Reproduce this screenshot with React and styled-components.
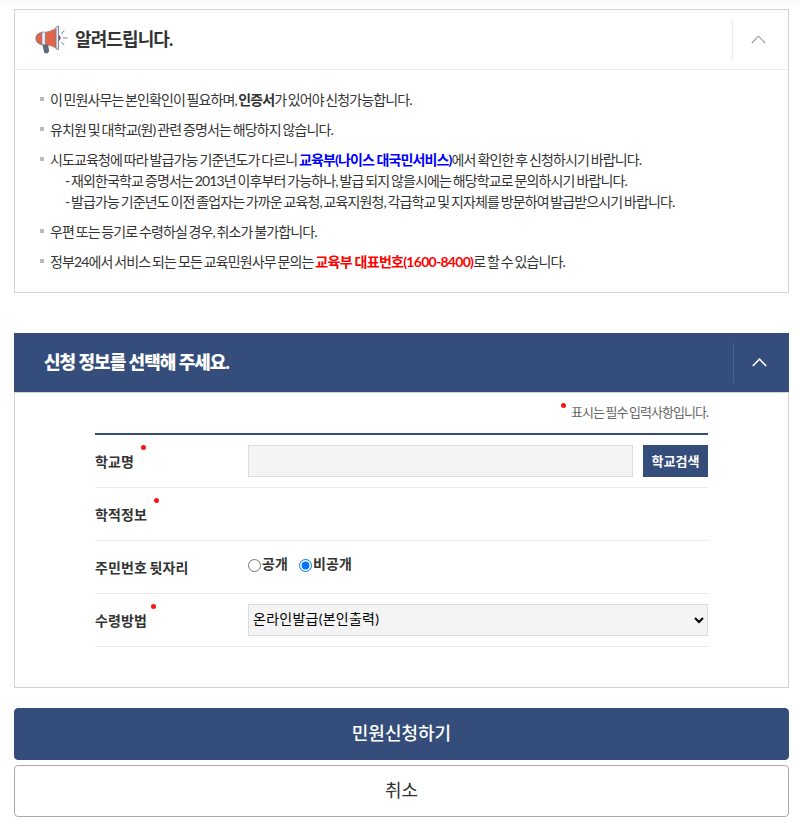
import React from "react";
import styled, { createGlobalStyle } from "styled-components";

const NAVY = "#344d7a";
const FONT = 'Lato, "Noto Sans CJK KR", sans-serif';

const GlobalStyle = createGlobalStyle`
  * { box-sizing: border-box; }
  html, body { margin: 0; padding: 0; background: #fff; }
  body { font-family: ${FONT}; color: #333; overflow: hidden; }
  h2, p, ul { margin: 0; padding: 0; }
`;

const Page = styled.main`
  width: 800px;
  height: 828px;
  padding: 9px 11px 0 14px;
  background: linear-gradient(#f8f8f8, #fff 5px);
`;

const NoticePanel = styled.section`
  height: 284px;
  border: 1px solid #d2d2d2;
  background: #fff;
`;

const NoticeHeader = styled.header`
  display: flex;
  align-items: center;
  height: 60px;
  padding-left: 20px;
  border-bottom: 1px solid #ebebeb;
`;

const Title = styled.h2`
  flex: 1;
  padding-bottom: 2px;
  font-size: 18px;
  font-weight: ${(p) => p.$weight || 700};
  line-height: 26px;
  letter-spacing: ${(p) => p.$spacing};
  white-space: pre;
`;

const NoticeTitle = styled(Title)`
  margin-left: 7px;
`;

const Toggle = styled.button`
  display: flex;
  align-items: center;
  justify-content: center;
  width: 56px;
  height: 40px;
  padding: 0 4px 0 0;
  border: 0;
  border-left: 1px solid ${(p) => p.$line};
  background: none;
  color: ${(p) => p.$color};
`;

const NoticeList = styled.ul`
  display: flex;
  flex-direction: column;
  gap: 9px;
  padding: 19px 0 0 25px;
  list-style: none;
`;

const NoticeItem = styled.li`
  display: flex;
  align-items: flex-start;
  gap: 6px;

  &::before {
    content: "";
    flex: none;
    width: 4px;
    height: 4px;
    margin-top: 8px;
    background: #bbb;
  }
`;

const Line = styled.p`
  height: 21px;
  padding-left: ${(p) => (p.$sub ? "15px" : "0")};
  font-size: 14px;
  line-height: 21px;
  letter-spacing: -0.88px;
  word-spacing: ${(p) => p.$gap || "-0.9px"};
  white-space: pre;
`;

const Strong = styled.b`
  font-weight: 700;
  letter-spacing: ${(p) => p.$spacing || "-0.88px"};
  word-spacing: 0.1px;
  color: ${(p) => p.$color || "inherit"};
`;

const FormPanel = styled.section`
  margin-top: 40px;
  height: 355px;
`;

const FormHeader = styled.header`
  display: flex;
  align-items: center;
  height: 59px;
  padding: 0 0 0 30px;
  background: ${NAVY};
  color: #fff;
`;

const FormBody = styled.div`
  height: 296px;
  padding: 0 80px;
  border: 1px solid #d2d2d2;
  background: #fff;
`;

const Guide = styled.p`
  display: flex;
  justify-content: flex-end;
  height: 40px;
  padding-top: 9px;
  font-size: 13px;
  line-height: 21px;
  letter-spacing: -0.96px;
  word-spacing: -0.9px;
  color: #666;
  white-space: pre;
`;

const Dot = styled.i`
  flex: none;
  width: 5px;
  height: 5px;
  margin: ${(p) => p.$margin};
  border-radius: 50%;
  background: #fb1414;
`;

const Fields = styled.div`
  border-top: 2px solid ${NAVY};
`;

const Row = styled.div`
  display: grid;
  grid-template-columns: 153px 1fr;
  height: 53px;
  border-bottom: 1px solid #ebebeb;
`;

const Label = styled.div`
  display: flex;
  padding-top: 16px;
  font-size: 14px;
  font-weight: 700;
  line-height: 22px;
  letter-spacing: 0.12px;
  word-spacing: -1px;
  white-space: pre;
`;

const Control = styled.div`
  display: flex;
  gap: ${(p) => p.$gap || "0"};
  padding-top: 10px;
`;

const SchoolInput = styled.input`
  width: 385px;
  height: 32px;
  border: 1px solid #dcdcdc;
  background: #f4f4f4;
`;

const SearchButton = styled.button`
  width: 65px;
  height: 32px;
  padding: 0;
  border: 0;
  background: ${NAVY};
  color: #fff;
  font: 700 13px/32px ${FONT};
  white-space: nowrap;
`;

const RadioLabel = styled.label`
  display: flex;
  height: 22px;
  margin: 2px 11px 0 0;
  font-size: 14px;
  font-weight: 700;
  line-height: 22px;
  letter-spacing: 0.12px;
`;

const Radio = styled.input`
  width: 13px;
  height: 13px;
  margin: 6px 1px 0 0;
`;

const Select = styled.select`
  width: 460px;
  height: 32px;
  padding: 0 1px 3px 0;
  border: 1px solid #dcdcdc;
  border-radius: 0;
  background: #f4f4f4;
  color: #000;
  font: 400 14px ${FONT};
  letter-spacing: 0.25px;
`;

const Actions = styled.div`
  display: flex;
  flex-direction: column;
  gap: 5px;
  margin-top: 20px;
`;

const ActionButton = styled.button`
  height: 52px;
  padding: 0 0 3px;
  border: 1px solid ${(p) => (p.$primary ? NAVY : "#aaa")};
  border-radius: 4px;
  background: ${(p) => (p.$primary ? NAVY : "#fff")};
  color: ${(p) => (p.$primary ? "#fff" : "#333")};
  font: ${(p) => (p.$primary ? 500 : 400)} 18px/47px "Noto Sans CJK KR", sans-serif;
`;

const Megaphone = () => (
  <svg width="33" height="30" viewBox="0 0 33 30">
    <path d="M7 18.500h6l1.200 8-2 2-2.800-.6z" fill="#5c6b7e" />
    <path d="M7 7.500h4v12h-4Q1 18.500 1 13.300Q1 8.500 7 7.500z" fill="#e2674a" stroke="#8b5260" strokeWidth=".9" />
    <path d="M10 7.500Q18 6 22 2.500v21.500Q18 20 10 19.500z" fill="#e2674a" stroke="#a4544f" strokeWidth=".6" />
    <path d="M7 7h3.200v12.700h-3.200z" fill="#f4f5fa" stroke="#7782a0" strokeWidth=".7" />
    <path d="M21 2.500Q22 .8 23.500 1v23.500q-1.500.5-2.500-1.500z" fill="#eceef6" stroke="#6d7895" strokeWidth=".9" />
    <path d="M24 10.500q3 2.500 0 5z" fill="#c45355" stroke="#6c587c" strokeWidth=".7" />
    <path d="M26.300 9l3-3.500M28 13h4.500M26.300 17l3 3.200" stroke="#76839d" strokeWidth="1" fill="none" />
  </svg>
);

const Chevron = ({ width }) => (
  <svg width="15" height="9" viewBox="0 0 15 9" fill="none" stroke="currentColor" strokeWidth={width}>
    <path d="M.8 8L7.500 1.200L14.200 8" />
  </svg>
);

export default function App() {
  return (
    <>
      <GlobalStyle />
      <Page>
        <NoticePanel>
          <NoticeHeader>
            <Megaphone />
            <NoticeTitle $spacing="-0.9px">알려드립니다.</NoticeTitle>
            <Toggle $line="#ebebeb" $color="#999"><Chevron width={1.1} /></Toggle>
          </NoticeHeader>
          <NoticeList>
            <NoticeItem>
              <Line $gap="-1.2px">이 민원사무는 본인확인이 필요하며, <Strong>인증서</Strong>가 있어야 신청가능합니다.</Line>
            </NoticeItem>
            <NoticeItem>
              <Line>유치원 및 대학교(원) 관련 증명서는 해당하지 않습니다.</Line>
            </NoticeItem>
            <NoticeItem>
              <div>
                <Line>시도교육청에 따라 발급가능 기준년도가 다르니 <Strong $color="#00f">교육부(나이스 대국민서비스)</Strong>에서 확인한 후 신청하시기 바랍니다.</Line>
                <Line $sub>- 재외한국학교 증명서는 2013년 이후부터 가능하나, 발급 되지 않을시에는 해당학교로 문의하시기 바랍니다.</Line>
                <Line $sub $gap="-1px">- 발급가능 기준년도 이전 졸업자는 가까운 교육청, 교육지원청, 각급학교 및 지자체를 방문하여 발급받으시기 바랍니다.</Line>
              </div>
            </NoticeItem>
            <NoticeItem>
              <Line $gap="-1.05px">우편 또는 등기로 수령하실 경우, 취소가 불가합니다.</Line>
            </NoticeItem>
            <NoticeItem>
              <Line>정부24에서 서비스 되는 모든 교육민원사무 문의는 <Strong $color="#f00" $spacing="-0.72px">교육부 대표번호(1600-8400)</Strong>로 할 수 있습니다.</Line>
            </NoticeItem>
          </NoticeList>
        </NoticePanel>

        <FormPanel>
          <FormHeader>
            <Title $spacing="-0.97px" $weight={900}>신청 정보를 선택해 주세요.</Title>
            <Toggle $line="#4a618b" $color="#fff"><Chevron width={1.6} /></Toggle>
          </FormHeader>
          <FormBody>
            <Guide><Dot $margin="1px 5px 0 0" />표시는 필수 입력사항입니다.</Guide>
            <Fields>
              <Row>
                <Label>학교명<Dot $margin="-6px 0 0 7px" /></Label>
                <Control $gap="10px">
                  <SchoolInput readOnly />
                  <SearchButton>학교검색</SearchButton>
                </Control>
              </Row>
              <Row>
                <Label>학적정보<Dot $margin="-6px 0 0 7px" /></Label>
              </Row>
              <Row>
                <Label>주민번호 뒷자리</Label>
                <Control>
                  <RadioLabel><Radio type="radio" name="open" />공개</RadioLabel>
                  <RadioLabel><Radio type="radio" name="open" defaultChecked />비공개</RadioLabel>
                </Control>
              </Row>
              <Row>
                <Label>수령방법<Dot $margin="-6px 0 0 4px" /></Label>
                <Control>
                  <Select><option>온라인발급(본인출력)</option></Select>
                </Control>
              </Row>
            </Fields>
          </FormBody>
        </FormPanel>

        <Actions>
          <ActionButton $primary>민원신청하기</ActionButton>
          <ActionButton>취소</ActionButton>
        </Actions>
      </Page>
    </>
  );
}
